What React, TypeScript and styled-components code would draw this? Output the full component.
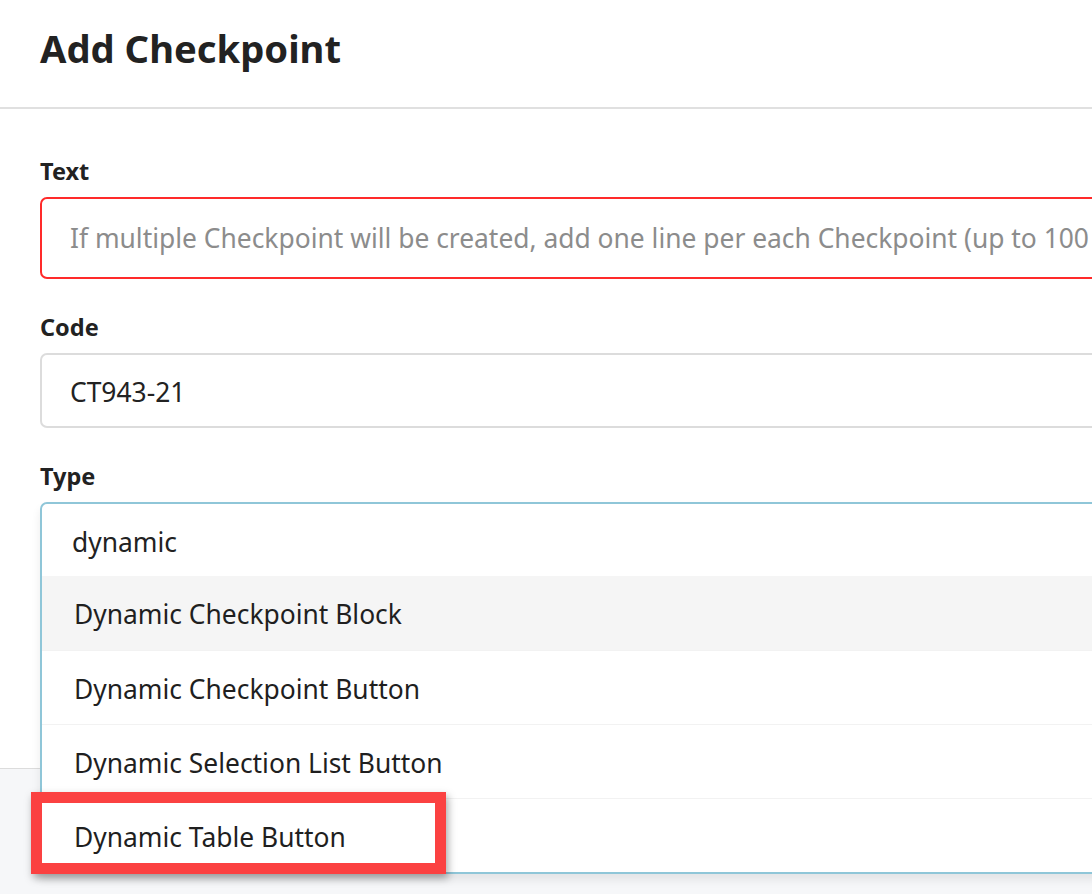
import { createGlobalStyle, styled } from "styled-components";

const GlobalStyle = createGlobalStyle`
  html, body {
    margin: 0;
    padding: 0;
    background: #ffffff;
    overflow: hidden;
  }
  * {
    box-sizing: border-box;
  }
`;

const font = `"Noto Sans", "Open Sans", Arial, sans-serif`;

const Page = styled.div`
  width: 1092px;
  height: 894px;
  overflow: hidden;
  position: relative;
  font-family: ${font};
  color: #222222;
`;

const Modal = styled.div`
  width: 1400px;
  display: flex;
  flex-direction: column;
`;

const Header = styled.header`
  height: 109px;
  padding: 29px 40px 0;
  border-bottom: 2px solid #e0e0e0;
`;

const Title = styled.h1`
  margin: 0;
  font-size: 38.2px;
  line-height: 39px;
  font-weight: 700;
  color: #222222;
`;

const Body = styled.div`
  height: 659px;
  padding: 47px 40px 0;
  display: flex;
  flex-direction: column;
`;

const Field = styled.div`
  display: flex;
  flex-direction: column;
  margin-bottom: 33px;
`;

const Label = styled.label`
  font-size: 23.5px;
  line-height: 30px;
  font-weight: 700;
  margin-bottom: 11px;
  color: #222222;
`;

const TextArea = styled.textarea`
  all: unset;
  box-sizing: border-box;
  display: block;
  width: 100%;
  height: 82px;
  padding: 21px 28px 0;
  border: 2px solid #ff2a2a;
  border-radius: 7px;
  font-family: ${font};
  font-size: 26.4px;
  line-height: 36px;
  color: #222222;
  white-space: nowrap;
  overflow: hidden;
  resize: none;
  &::placeholder {
    color: #8c8c8c;
    opacity: 1;
  }
`;

const Input = styled.input`
  all: unset;
  box-sizing: border-box;
  display: block;
  width: 100%;
  height: 75px;
  padding: 3px 28px 0;
  border: 2px solid #dcdcdc;
  border-radius: 7px;
  font-family: ${font};
  font-size: 26.4px;
  line-height: 36px;
  color: #222222;
`;

const SelectSlot = styled.div`
  position: relative;
  height: 74px;
`;

const Combo = styled.div`
  position: absolute;
  top: 0;
  left: 0;
  right: 0;
  z-index: 2;
  background: #ffffff;
  border: 2px solid #8fc6d8;
  border-radius: 7px 7px 0 0;
  box-shadow: 0 6px 10px rgba(0, 0, 0, 0.08);
`;

const SearchInput = styled.input`
  all: unset;
  box-sizing: border-box;
  display: block;
  width: 100%;
  height: 72px;
  padding: 3px 30px 0;
  font-family: ${font};
  font-size: 26.4px;
  line-height: 36px;
  color: #222222;
`;

const OptionList = styled.ul`
  list-style: none;
  margin: 0;
  padding: 0;
`;

const Option = styled.li<{ $active?: boolean }>`
  height: 74px;
  display: flex;
  align-items: center;
  padding: 2px 32px 0;
  font-size: 26.4px;
  line-height: 36px;
  color: #1f1f1f;
  background: ${({ $active }) => ($active ? "#f5f5f5" : "#ffffff")};
  & + & {
    border-top: 1px solid #f2f2f2;
  }
`;

const Footer = styled.footer`
  height: 200px;
  border-top: 1px solid #dcdcdc;
  background: #f6f7f9;
`;

const Highlight = styled.div`
  position: absolute;
  left: 31px;
  top: 792px;
  width: 415px;
  height: 82px;
  border: 11px solid #fb4141;
  box-shadow: 2px 4px 8px rgba(0, 0, 0, 0.35);
  z-index: 3;
  pointer-events: none;
`;

const options = [
  "Dynamic Checkpoint Block",
  "Dynamic Checkpoint Button",
  "Dynamic Selection List Button",
  "Dynamic Table Button",
];

export default function App() {
  return (
    <>
      <GlobalStyle />
      <Page>
        <Modal>
          <Header>
            <Title>Add Checkpoint</Title>
          </Header>
          <Body>
            <Field>
              <Label>Text</Label>
              <TextArea placeholder="If multiple Checkpoint will be created, add one line per each Checkpoint (up to 100 Checkpoints)." />
            </Field>
            <Field>
              <Label>Code</Label>
              <Input defaultValue="CT943-21" />
            </Field>
            <Field>
              <Label>Type</Label>
              <SelectSlot>
                <Combo>
                  <SearchInput defaultValue="dynamic" />
                  <OptionList>
                    {options.map((o, i) => (
                      <Option key={o} $active={i === 0}>
                        {o}
                      </Option>
                    ))}
                  </OptionList>
                </Combo>
              </SelectSlot>
            </Field>
          </Body>
          <Footer />
        </Modal>
        <Highlight />
      </Page>
    </>
  );
}
